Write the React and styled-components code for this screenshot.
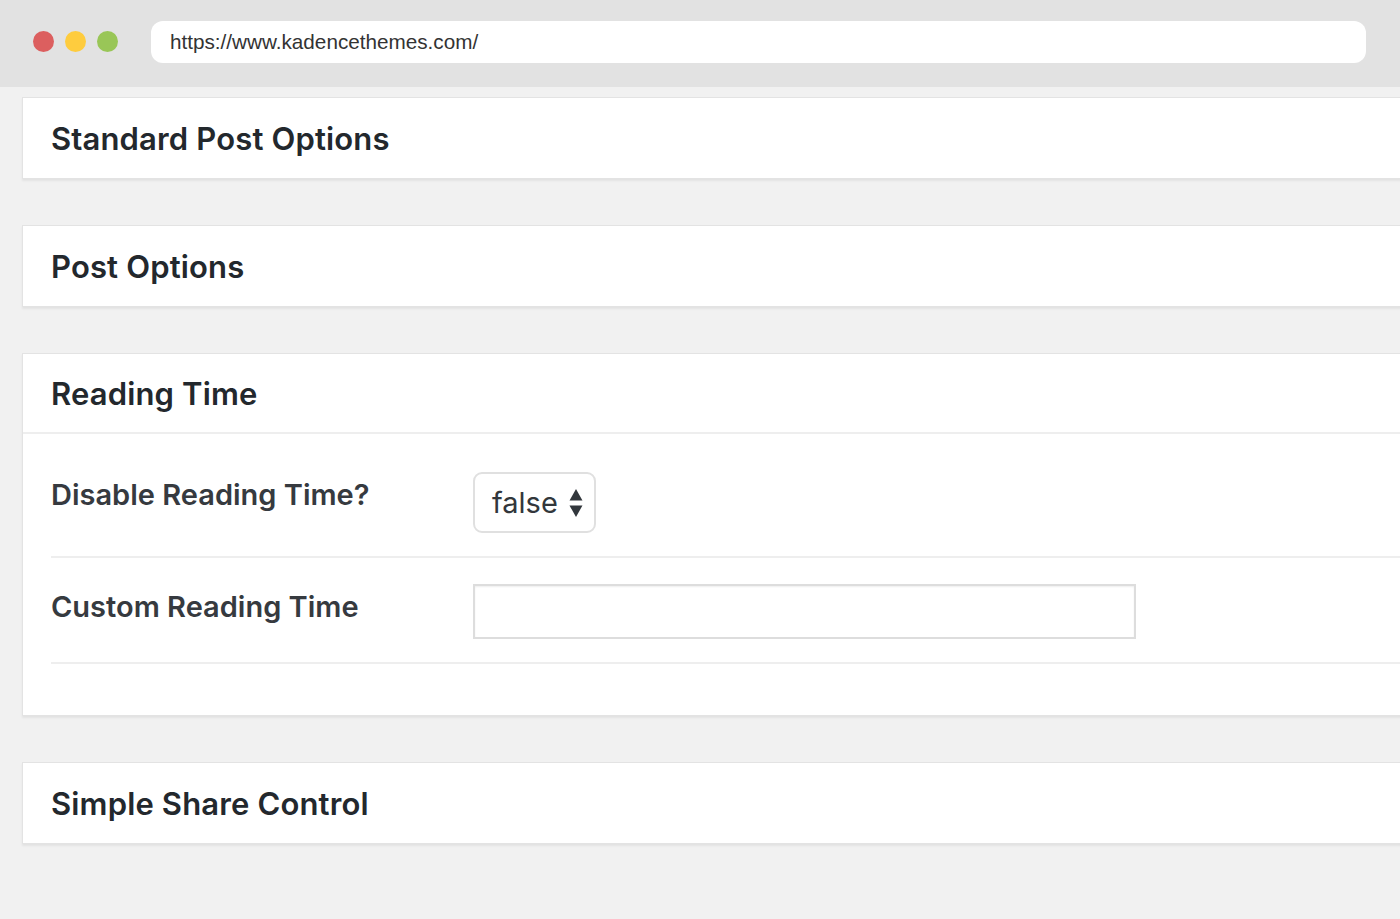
import React from "react";
import styled, { createGlobalStyle } from "styled-components";

const GlobalStyle = createGlobalStyle`
  html, body {
    margin: 0;
    padding: 0;
    overflow: hidden;
    background: #f1f1f1;
  }
  * {
    box-sizing: border-box;
  }
`;

const Page = styled.div`
  width: 1400px;
  height: 919px;
  background: #f1f1f1;
  font-family: Inter, "Noto Sans", "Liberation Sans", sans-serif;
`;

const TopBar = styled.div`
  height: 87px;
  background: #e2e2e2;
  display: flex;
  align-items: center;
  padding: 0 34px 4px 33px;
`;

const Dots = styled.div`
  display: flex;
  gap: 11px;
  margin-right: 33px;
`;

const Dot = styled.span`
  width: 21px;
  height: 21px;
  border-radius: 50%;
  background: ${(p) => p.color};
`;

const UrlBar = styled.div`
  flex: 1;
  height: 42px;
  background: #fff;
  border-radius: 12px;
  display: flex;
  align-items: center;
  padding-left: 19px;
  font-family: "Liberation Sans", Arial, sans-serif;
  font-size: 20.7px;
  color: #333;
`;

const Content = styled.div`
  padding: 10px 0 0 22px;
  display: flex;
  flex-direction: column;
  gap: 46px;
`;

const Panel = styled.section`
  width: calc(100% + 20px);
  background: #fff;
  border: 1px solid #e3e3e3;
  box-shadow: 0 2px 2px rgba(0, 0, 0, 0.06);
`;

const Header = styled.div`
  height: 80px;
  display: flex;
  align-items: center;
  padding-left: 28px;
  border-bottom: ${(p) => (p.divided ? "2px solid #eeeeee" : "none")};
`;

const Title = styled.h2`
  margin: 0;
  font-size: 31px;
  font-weight: 600;
  color: #23282d;
  letter-spacing: 0.15px;
`;

const Body = styled.div`
  padding: 0 0 51px 28px;
`;

const Row = styled.div`
  display: grid;
  grid-template-columns: 422px 1fr;
  align-items: start;
  padding: ${(p) => p.pad};
  border-bottom: 2px solid #eeeeee;
`;

const Label = styled.label`
  margin-top: 5px;
  font-size: 29px;
  line-height: 36px;
  font-weight: 600;
  color: #363a3f;
`;

const Select = styled.div`
  width: 123px;
  height: 61px;
  border: 2px solid #e0e0e0;
  border-radius: 9px;
  display: flex;
  align-items: center;
  padding-left: 17px;
  gap: 11px;
  font-size: 29px;
  color: #32373c;
  background: #fff;
`;

const Arrows = styled.svg`
  width: 14px;
  height: 30px;
  display: block;
`;

const TextInput = styled.input`
  width: 663px;
  height: 55px;
  border: 2px solid #dddddd;
  box-shadow: inset 0 1px 2px rgba(0, 0, 0, 0.07);
  background: #fff;
  outline: none;
  padding: 0 10px;
  font-size: 26px;
`;

const boxes = ["Standard Post Options", "Post Options"];

export default function App() {
  return (
    <Page>
      <GlobalStyle />
      <TopBar>
        <Dots>
          <Dot color="#dc5f5f" />
          <Dot color="#fecc3e" />
          <Dot color="#99c657" />
        </Dots>
        <UrlBar>https://www.kadencethemes.com/</UrlBar>
      </TopBar>
      <Content>
        {boxes.map((b) => (
          <Panel key={b}>
            <Header>
              <Title>{b}</Title>
            </Header>
          </Panel>
        ))}
        <Panel>
          <Header divided>
            <Title>Reading Time</Title>
          </Header>
          <Body>
            <Row pad="38px 0 23px">
              <Label>Disable Reading Time?</Label>
              <Select>
                <span>false</span>
                <Arrows viewBox="0 0 14 30">
                  <path d="M7 1 L13.5 12.5 H0.5 Z" fill="#32373c" />
                  <path d="M7 29 L13.5 17.5 H0.5 Z" fill="#32373c" />
                </Arrows>
              </Select>
            </Row>
            <Row pad="26px 0 23px">
              <Label>Custom Reading Time</Label>
              <TextInput type="text" />
            </Row>
          </Body>
        </Panel>
        <Panel>
          <Header>
            <Title>Simple Share Control</Title>
          </Header>
        </Panel>
      </Content>
    </Page>
  );
}
